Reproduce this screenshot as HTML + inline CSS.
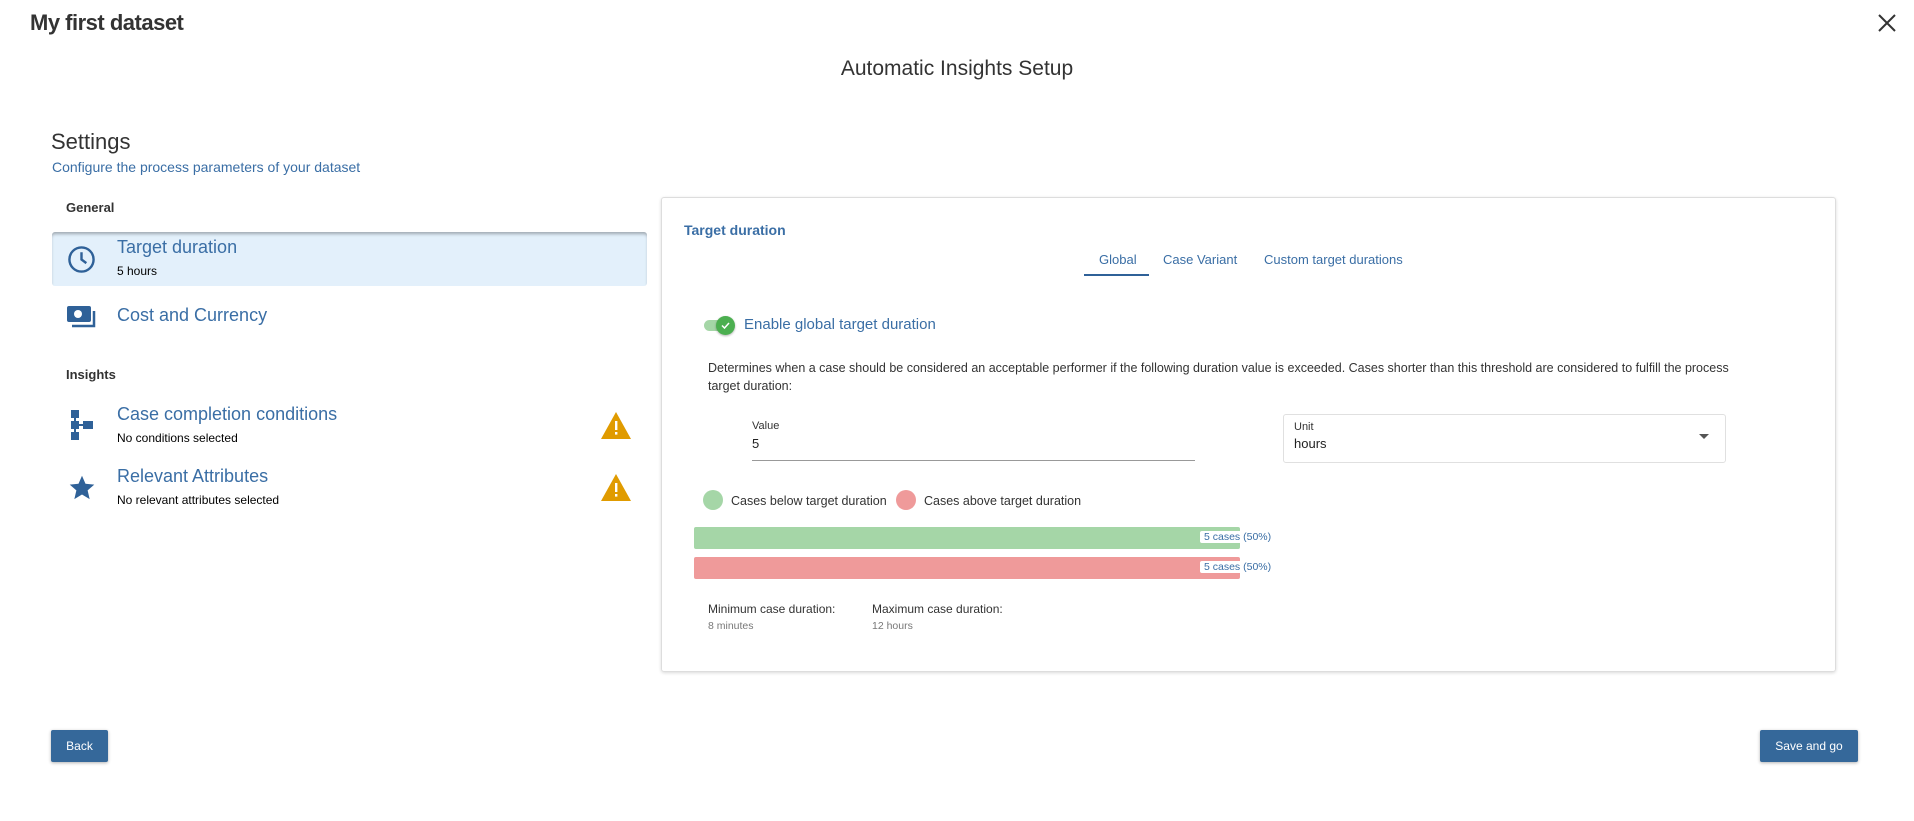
<!DOCTYPE html>
<html><head><meta charset="utf-8"><style>
*{margin:0;padding:0;box-sizing:border-box}
body{width:1914px;height:821px;background:#fff;font-family:"Liberation Sans",sans-serif;position:relative;overflow:hidden;color:#333}
.a{position:absolute;white-space:nowrap}
.blue{color:#3a6ea5}
</style></head><body>
<div class="a" style="left:30px;top:10px;font-size:22px;font-weight:bold;color:#333;letter-spacing:-0.5px">My first dataset</div>
<svg class="a" style="left:1877px;top:13px" width="20" height="20" viewBox="0 0 20 20"><path d="M2 2L18 18M18 2L2 18" stroke="#333" stroke-width="2"/></svg>
<div class="a" style="left:0;width:1914px;text-align:center;top:57px;font-size:21px;color:#333">Automatic Insights Setup</div>

<div class="a" style="left:51px;top:129px;font-size:22px;color:#333">Settings</div>
<div class="a blue" style="left:52px;top:159px;font-size:14px">Configure the process parameters of your dataset</div>
<div class="a" style="left:66px;top:200px;font-size:13px;font-weight:bold;color:#333">General</div>

<div class="a" style="left:52px;top:232px;width:595px;height:54px;background:#e3f0fb;border-radius:3px;box-shadow:inset 0 3px 3px -1px rgba(0,0,0,.3)"></div>
<svg class="a" style="left:67px;top:245px" width="29" height="29" viewBox="0 0 24 24"><circle cx="12" cy="12" r="10" fill="none" stroke="#2f6198" stroke-width="2"/><path d="M12 6v6l4 3" fill="none" stroke="#2f6198" stroke-width="2"/></svg>
<div class="a blue" style="left:117px;top:237px;font-size:18px">Target duration</div>
<div class="a" style="left:117px;top:264px;font-size:12px;color:#000">5 hours</div>

<svg class="a" style="left:67px;top:305px" width="30" height="24" viewBox="0 0 30 24"><rect x="0" y="1" width="24" height="16" rx="2" fill="#2f6198"/><circle cx="11" cy="9" r="4" fill="#fff"/><path d="M27 6v15H5" fill="none" stroke="#2f6198" stroke-width="2.5"/></svg>
<div class="a blue" style="left:117px;top:305px;font-size:18px">Cost and Currency</div>

<div class="a" style="left:66px;top:367px;font-size:13px;font-weight:bold;color:#333">Insights</div>

<svg class="a" style="left:70px;top:410px" width="24" height="30" viewBox="0 0 24 30"><rect x="1" y="0" width="8" height="8" fill="#2f6198"/><rect x="1" y="11" width="8" height="8" fill="#2f6198"/><rect x="1" y="22" width="8" height="8" fill="#2f6198"/><rect x="13" y="11" width="10" height="8" fill="#2f6198"/><rect x="4" y="0" width="2" height="30" fill="#2f6198"/><rect x="5" y="14" width="10" height="2" fill="#2f6198"/></svg>
<div class="a blue" style="left:117px;top:404px;font-size:18px">Case completion conditions</div>
<div class="a" style="left:117px;top:431px;font-size:12px;color:#000">No conditions selected</div>
<svg class="a" style="left:601px;top:412px" width="30" height="27" viewBox="0 0 30 27"><path d="M15 0L30 27H0Z" fill="#e09b00"/><rect x="14" y="9" width="2.4" height="9" fill="#fff"/><rect x="14" y="20" width="2.4" height="2.6" fill="#fff"/></svg>

<svg class="a" style="left:68px;top:474px" width="28" height="27" viewBox="0 0 24 24"><path d="M12 1.5l3.1 7.2 7.8.7-5.9 5.2 1.8 7.7L12 18.2 5.2 22.3 7 14.6 1.1 9.4l7.8-.7z" fill="#2f6198"/></svg>
<div class="a blue" style="left:117px;top:466px;font-size:18px">Relevant Attributes</div>
<div class="a" style="left:117px;top:493px;font-size:12px;color:#000">No relevant attributes selected</div>
<svg class="a" style="left:601px;top:474px" width="30" height="27" viewBox="0 0 30 27"><path d="M15 0L30 27H0Z" fill="#e09b00"/><rect x="14" y="9" width="2.4" height="9" fill="#fff"/><rect x="14" y="20" width="2.4" height="2.6" fill="#fff"/></svg>

<div class="a" style="left:661px;top:197px;width:1175px;height:475px;border:1px solid #ddd;border-radius:3px;box-shadow:0 1px 3px rgba(0,0,0,.15)"></div>
<div class="a blue" style="left:684px;top:222px;font-size:14px;font-weight:bold">Target duration</div>
<div class="a blue" style="left:1099px;top:252px;font-size:13px">Global</div>
<div class="a" style="left:1084px;top:274px;width:65px;height:2px;background:#2f6198"></div>
<div class="a blue" style="left:1163px;top:252px;font-size:13px">Case Variant</div>
<div class="a blue" style="left:1264px;top:252px;font-size:13px">Custom target durations</div>

<div class="a" style="left:704px;top:320px;width:22px;height:11px;border-radius:6px;background:#a5d6a7"></div>
<div class="a" style="left:716px;top:316px;width:19px;height:19px;border-radius:50%;background:#4caf50;box-shadow:0 1px 2px rgba(0,0,0,.3)"></div>
<svg class="a" style="left:720px;top:320px" width="11" height="11" viewBox="0 0 11 11"><path d="M2 5.5l2.5 2.5L9 3" fill="none" stroke="#fff" stroke-width="1.5"/></svg>
<div class="a blue" style="left:744px;top:316px;font-size:15px">Enable global target duration</div>

<div class="a" style="left:708px;top:359px;font-size:12.5px;color:#333;line-height:18px;white-space:normal;width:1040px">Determines when a case should be considered an acceptable performer if the following duration value is exceeded. Cases shorter than this threshold are considered to fulfill the process target duration:</div>

<div class="a" style="left:752px;top:420px;font-size:11px;color:#333">Value</div>
<div class="a" style="left:752px;top:436px;font-size:13px;color:#222">5</div>
<div class="a" style="left:752px;top:460px;width:443px;height:1px;background:#999"></div>

<div class="a" style="left:1283px;top:414px;width:443px;height:49px;border:1px solid #e0e0e0;border-radius:3px"></div>
<div class="a" style="left:1294px;top:421px;font-size:11px;color:#333">Unit</div>
<div class="a" style="left:1294px;top:436px;font-size:13px;color:#222">hours</div>
<svg class="a" style="left:1699px;top:434px" width="10" height="6" viewBox="0 0 10 6"><path d="M0 0h10L5 5z" fill="#555"/></svg>

<div class="a" style="left:703px;top:490px;width:20px;height:20px;border-radius:50%;background:#a5d6a7"></div>
<div class="a" style="left:731px;top:494px;font-size:12.5px;color:#333">Cases below target duration</div>
<div class="a" style="left:896px;top:490px;width:20px;height:20px;border-radius:50%;background:#ef9a9a"></div>
<div class="a" style="left:924px;top:494px;font-size:12.5px;color:#333">Cases above target duration</div>

<div class="a" style="left:694px;top:527px;width:546px;height:22px;background:#a5d6a7;border-radius:2px"></div>
<div class="a" style="left:694px;top:557px;width:546px;height:22px;background:#ef9a9a;border-radius:2px"></div>
<div class="a blue" style="left:1200px;top:531px;font-size:10.5px;background:#fff;padding:0 1px 0 4px;border-radius:2px">5 cases (50%)</div>
<div class="a blue" style="left:1200px;top:561px;font-size:10.5px;background:#fff;padding:0 1px 0 4px;border-radius:2px">5 cases (50%)</div>

<div class="a" style="left:708px;top:602px;font-size:12px;color:#333">Minimum case duration:</div>
<div class="a" style="left:708px;top:620px;font-size:10.5px;color:#777">8 minutes</div>
<div class="a" style="left:872px;top:602px;font-size:12px;color:#333">Maximum case duration:</div>
<div class="a" style="left:872px;top:620px;font-size:10.5px;color:#777">12 hours</div>

<div class="a" style="left:51px;top:730px;width:57px;height:32px;background:#35689a;border-radius:2px;color:#fff;font-size:12px;text-align:center;line-height:32px;box-shadow:0 1px 3px rgba(0,0,0,.3)">Back</div>
<div class="a" style="left:1760px;top:730px;width:98px;height:32px;background:#35689a;border-radius:2px;color:#fff;font-size:12px;text-align:center;line-height:32px;box-shadow:0 1px 3px rgba(0,0,0,.3)">Save and go</div>
</body></html>
